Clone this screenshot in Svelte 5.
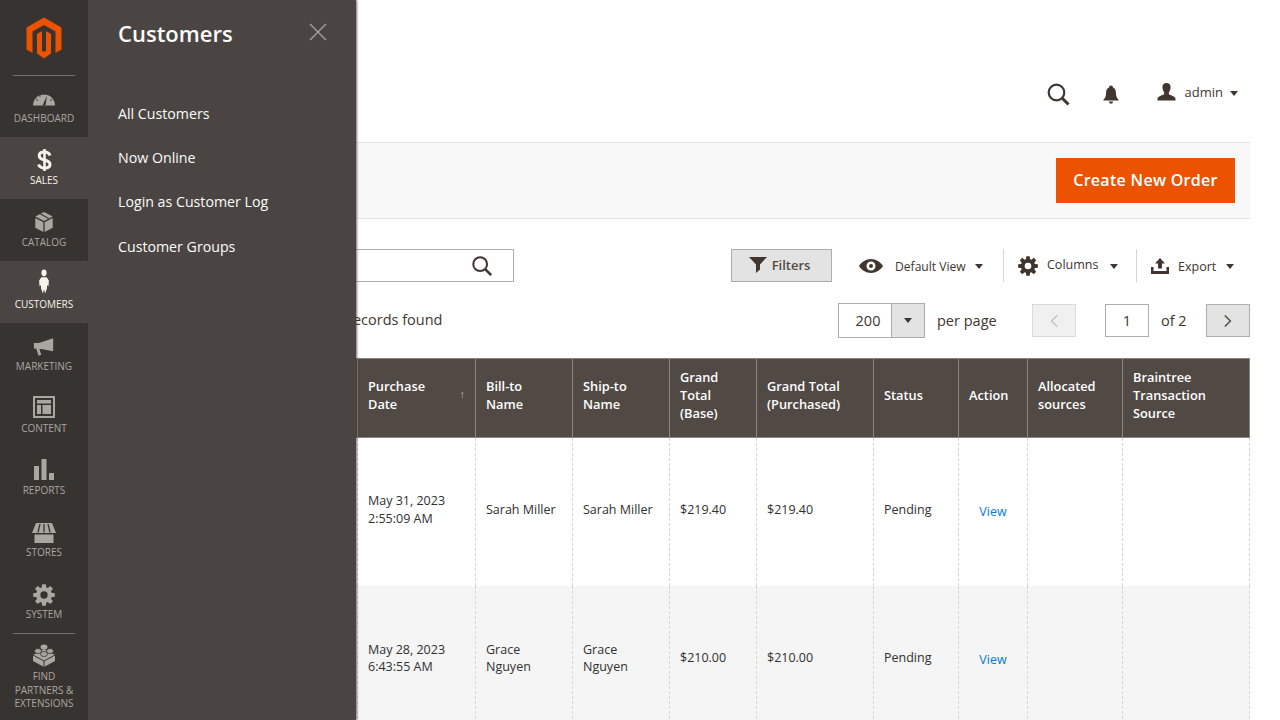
<script>
  const gear = (() => {
    // 8 tooth cog with a round hole, drawn in a 24x24 box
    let d = '';
    for (let i = 0; i < 8; i++) {
      const a = (i * Math.PI) / 4;
      const pts = [[-0.3, 8.6], [-0.17, 12], [0.17, 12], [0.3, 8.6]];
      for (const [o, r] of pts) {
        const x = 12 + r * Math.sin(a + o);
        const y = 12 - r * Math.cos(a + o);
        d += (d ? 'L' : 'M') + x.toFixed(2) + ' ' + y.toFixed(2);
      }
    }
    return d + 'Z M12 8a4 4 0 1 0 0 8a4 4 0 1 0 0-8Z';
  })();

  const navItems = [
    { id: 'dashboard', label: 'Dashboard' },
    { id: 'sales', label: 'Sales', active: true },
    { id: 'catalog', label: 'Catalog' },
    { id: 'customers', label: 'Customers', active: true },
    { id: 'marketing', label: 'Marketing' },
    { id: 'content', label: 'Content' },
    { id: 'reports', label: 'Reports' },
    { id: 'stores', label: 'Stores' },
    { id: 'system', label: 'System' }
  ];

  const links = ['All Customers', 'Now Online', 'Login as Customer Log', 'Customer Groups'];

  const columns = [
    { label: '', w: 239 },
    { label: 'Purchase Date', w: 118, sort: true },
    { label: 'Bill-to Name', w: 97 },
    { label: 'Ship-to Name', w: 97 },
    { label: 'Grand Total (Base)', w: 87 },
    { label: 'Grand Total (Purchased)', w: 117 },
    { label: 'Status', w: 85 },
    { label: 'Action', w: 69 },
    { label: 'Allocated sources', w: 95 },
    { label: 'Braintree Transaction Source', w: 127 }
  ];

  const rows = [
    { date: ['May 31, 2023', '2:55:09 AM'], bill: 'Sarah Miller', ship: 'Sarah Miller', base: '$219.40', paid: '$219.40', status: 'Pending' },
    { date: ['May 28, 2023', '6:43:55 AM'], bill: 'Grace Nguyen', ship: 'Grace Nguyen', base: '$210.00', paid: '$210.00', status: 'Pending' }
  ];
</script>

<div class="shell">
  <nav class="nav">
    <div class="logo">
      <svg width="36" height="42" viewBox="26.500 16.500 36 42">
        <path fill="#eb5202" d="M44.500 17L62 27V49L56 52.500V31L44.500 24.500L33 31V52.500L27 49V27Z" />
        <path fill="#eb5202" d="M37.500 33.500L42.500 30.500V50L44.500 51.500L46.500 50V30.500L51.500 33.500V53L44.500 58L37.500 53Z" />
      </svg>
    </div>
    <ul class="menu">
      {#each navItems as item}
        <li class="item" class:active={item.active}>
          <span class="ico {item.id}">
            {#if item.id === 'dashboard'}
              <svg width="24" height="18" viewBox="0 0 24 18"><path fill="currentColor" d="M1 16.500a11 11 0 1 1 22 0Z" /><path fill="#373330" d="M10.500 16.500L15 6.500L13.500 16.500Z" /><circle cx="5" cy="11" r=".8" fill="#373330" /><circle cx="8" cy="7" r=".8" fill="#373330" /><circle cx="12" cy="5" r=".8" fill="#373330" /><circle cx="19" cy="11" r=".8" fill="#373330" /></svg>
            {:else if item.id === 'sales'}
              <svg width="15" height="22" viewBox="0 0 15 22"><path fill="none" stroke="currentColor" stroke-width="3" d="M13 6.500C12 3.500 9.500 3 7.500 3C4 3 2.200 4.800 2.200 6.800C2.200 12.500 13 9.500 13 15.500C13 17.800 10.500 19 7.500 19C5 19 2.500 18 1.500 15.500" /><path fill="currentColor" d="M6.200 0H8.800V22H6.200Z" /></svg>
            {:else if item.id === 'catalog'}
              <svg width="22" height="22" viewBox="0 0 22 24"><path fill="currentColor" d="M11 1L20.500 6L11 11L1.500 6Z" /><path fill="#373330" d="M6 3.300L15.500 8.500L16.800 7.800L7.500 2.600Z" /><path fill="currentColor" d="M1.500 7.500L10.300 12.200V23L1.500 18.300ZM20.500 7.500V18.300L11.700 23V12.200Z" /></svg>
            {:else if item.id === 'customers'}
              <svg width="12" height="25" viewBox="0 0 16 26" preserveAspectRatio="none"><circle cx="8" cy="4" r="3.500" fill="currentColor" /><path fill="currentColor" d="M4.500 8.500H11.500L14.500 12L14 18L12 17V20L9.500 25.500L8 21L6.500 25.500L4 20V17L2 18L1.500 12Z" /></svg>
            {:else if item.id === 'marketing'}
              <svg width="22" height="19" viewBox="0 0 24 20"><path fill="currentColor" d="M22 0V14L9 11.500H7L9 18L6 19L3.500 11H1V5H6.500Z" /></svg>
            {:else if item.id === 'content'}
              <svg width="22" height="22" viewBox="0 0 22 22"><path fill="currentColor" fill-rule="evenodd" d="M0 0H22V22H0ZM2 2V20H20V2ZM4 4H18V7.500H4ZM4 9H8V18H4ZM9.500 9H18V18H9.500Z" /></svg>
            {:else if item.id === 'reports'}
              <svg width="20" height="21" viewBox="0 0 20 21"><path fill="currentColor" d="M0 7H5V21H0ZM7.500 0H12.500V21H7.500ZM15 14H20V21H15Z" /></svg>
            {:else if item.id === 'stores'}
              <svg width="24" height="20" viewBox="0 0 24 20"><path fill="currentColor" d="M4 0H20L24 10H0ZM2.500 11.500H21.500V20H2.500Z" /><path stroke="#373330" stroke-width="1.300" d="M8 1L6 9.500M12 1V9.500M16 1L18 9.500" /></svg>
            {:else if item.id === 'system'}
              <svg width="22" height="22" viewBox="0 0 24 24"><path fill="currentColor" fill-rule="evenodd" d={gear} /></svg>
            {/if}
          </span>
          <span class="label">{item.label}</span>
        </li>
      {/each}
    </ul>
    <div class="item partners">
      <span class="ico">
        <svg width="24" height="24" viewBox="0 0 24 24"><path fill="currentColor" d="M12 6L23 12V18L12 24L1 18V12Z" /><ellipse cx="12" cy="4" rx="3.500" ry="2.500" fill="currentColor" /><ellipse cx="6" cy="8" rx="3.500" ry="2.500" fill="currentColor" stroke="#373330" stroke-width=".8" /><ellipse cx="18" cy="8" rx="3.500" ry="2.500" fill="currentColor" stroke="#373330" stroke-width=".8" /><ellipse cx="12" cy="11" rx="3.500" ry="2.500" fill="currentColor" stroke="#373330" stroke-width=".8" /><path stroke="#373330" fill="none" d="M1 12L12 18L23 12M12 18V24" /></svg>
      </span>
      <span class="label">Find<br />Partners &amp;<br />Extensions</span>
    </div>
  </nav>

  <aside class="panel">
    <div class="panel-head">
      <h2>Customers</h2>
      <svg class="close" width="18" height="18" viewBox="0 0 18 18"><path stroke="#a8a5a1" stroke-width="1.300" fill="none" d="M1 1L17 17M17 1L1 17" /></svg>
    </div>
    <ul class="links">
      {#each links as link}
        <li>{link}</li>
      {/each}
    </ul>
  </aside>

  <main class="main">
    <header class="top">
      <svg width="24" height="24" viewBox="0 0 24 24" class="top-search"><circle cx="10.500" cy="10.500" r="7.800" fill="none" stroke="#41362f" stroke-width="2.200" /><path stroke="#41362f" stroke-width="3" d="M16 16L22.500 22.500" /></svg>
      <svg width="16" height="19" viewBox="0 0 16 19" class="top-bell"><path fill="#41362f" d="M8 0.500C9.500 0.500 10 1.500 10 2.500C12.500 3.500 13 6 13 9C13 12 14.500 13.500 15.500 14.500V15.500H.5V14.500C1.500 13.500 3 12 3 9C3 6 3.500 3.500 6 2.500C6 1.500 6.500 .5 8 .5ZM6 16.500H10C10 18 9 18.700 8 18.700C7 18.700 6 18 6 16.500Z" /></svg>
      <svg width="19" height="18" viewBox="0 0 20 20" class="top-user" preserveAspectRatio="none"><path fill="#41362f" d="M10 0C13 0 14.300 2 14.300 4.500C14.300 7 13.500 9 12.500 10.500V12.500C14.500 13.800 19 14.500 19.500 17.500V19.500H.5V17.500C1 14.500 5.500 13.800 7.500 12.500V10.500C6.500 9 5.700 7 5.700 4.500C5.700 2 7 0 10 0Z" /></svg>
      <span class="admin">admin</span>
      <i class="caret admin-caret"></i>
    </header>

    <section class="actions">
      <button class="primary">Create New Order</button>
    </section>

    <div class="toolbar">
      <div class="search">
        <svg width="22" height="22" viewBox="0 0 24 24"><circle cx="10" cy="10" r="7.500" fill="none" stroke="#41362f" stroke-width="2.200" /><path stroke="#41362f" stroke-width="2.800" d="M15.500 15.500L22 22" /></svg>
      </div>
      <button class="filters">
        <svg width="18" height="16" viewBox="0 0 18 16"><path fill="#41362f" d="M0 0H18L11 7.500V12.500L7 16V7.500Z" /></svg>
        Filters
      </button>
      <div class="tool view">
        <svg width="24" height="14" viewBox="0 0 24 14"><path fill="#41362f" fill-rule="evenodd" d="M12 0C17 0 21.500 3 24 7C21.500 11 17 14 12 14C7 14 2.500 11 0 7C2.500 3 7 0 12 0ZM12 2.500A4.500 4.500 0 1 0 12 11.500A4.500 4.500 0 1 0 12 2.500ZM12 5A2 2 0 1 1 12 9A2 2 0 1 1 12 5Z" /></svg>
        <span>Default View</span>
        <i class="caret"></i>
      </div>
      <div class="tool cols">
        <svg width="20" height="20" viewBox="0 0 24 24"><path fill="#41362f" fill-rule="evenodd" d={gear} /></svg>
        <span class="raise">Columns</span>
        <i class="caret"></i>
      </div>
      <div class="tool export">
        <svg width="18" height="16" viewBox="0 0 18 16"><path fill="#41362f" d="M9 0L14 5.500H11V10.500H7V5.500H4ZM0 9H2.500V13H15.500V9H18V16H0Z" /></svg>
        <span>Export</span>
        <i class="caret"></i>
      </div>
    </div>

    <div class="pager">
      <span class="found">records found</span>
      <div class="per">
        <span class="per-val">200</span>
        <span class="per-btn"><i class="caret"></i></span>
      </div>
      <span class="per-text">per page</span>
      <span class="page-btn prev">
        <svg width="8" height="14" viewBox="0 0 10 16"><path fill="none" stroke="#c2c2c2" stroke-width="1.800" d="M9 1L2 8L9 15" /></svg>
      </span>
      <span class="page-input">1</span>
      <span class="of">of 2</span>
      <span class="page-btn next">
        <svg width="8" height="14" viewBox="0 0 10 16"><path fill="none" stroke="#514943" stroke-width="1.800" d="M1 1L8 8L1 15" /></svg>
      </span>
    </div>

    <table>
      <colgroup>
        {#each columns as c}
          <col style="width: {c.w}px" />
        {/each}
      </colgroup>
      <thead>
        <tr>
          {#each columns as c}
            <th class:sorted={c.sort}>
              {c.label}
              {#if c.sort}<span class="arrow">↑</span>{/if}
            </th>
          {/each}
        </tr>
      </thead>
      <tbody>
        {#each rows as r}
          <tr>
            <td></td>
            <td>{r.date[0]}<br />{r.date[1]}</td>
            <td>{r.bill}</td>
            <td>{r.ship}</td>
            <td>{r.base}</td>
            <td>{r.paid}</td>
            <td>{r.status}</td>
            <td class="act"><span class="view-link">View</span></td>
            <td></td>
            <td></td>
          </tr>
        {/each}
      </tbody>
    </table>
  </main>
</div>

<style>
  :global(body) {
    margin: 0;
    overflow: hidden;
    background: #fff;
  }
  .shell {
    position: relative;
    display: flex;
    height: 720px;
    overflow: hidden;
    font-family: "Open Sans", sans-serif;
    color: #41362f;
  }

  .nav {
    flex: 0 0 88px;
    display: flex;
    flex-direction: column;
    background: #373330;
  }
  .logo {
    height: 76px;
    margin: 0 13px -1px;
    box-sizing: border-box;
    padding-top: 17px;
    display: flex;
    justify-content: center;
    border-bottom: 1px solid #736e69;
  }
  .menu {
    list-style: none;
    margin: 0;
    padding: 0;
  }
  .item {
    height: 62px;
    box-sizing: border-box;
    display: flex;
    flex-direction: column;
    align-items: center;
    justify-content: flex-end;
    padding-bottom: 12px;
    color: #aaa6a0;
  }
  .item.active {
    background: #4a4542;
    color: #f7f3eb;
  }
  .ico {
    height: 26px;
    display: flex;
    align-items: center;
    justify-content: center;
  }
  .dashboard svg,
  .sales svg,
  .catalog svg {
    margin-top: 2px;
  }
  .marketing svg,
  .stores svg,
  .system svg {
    margin-top: 4px;
  }
  .customers svg {
    margin-top: -3px;
  }
  .label {
    font-size: 10px;
    line-height: 13px;
    margin-top: 2px;
    text-transform: uppercase;
    text-align: center;
  }
  .partners {
    height: auto;
    margin: 0 13px;
    padding: 8px 0 0;
    border-top: 1px solid #736e69;
    justify-content: flex-start;
  }
  .partners .label {
    margin: 2px -8px 0;
    line-height: 13.500px;
  }

  .panel {
    position: absolute;
    left: 88px;
    top: 0;
    width: 268px;
    height: 100%;
    background: #4a4542;
    box-shadow: 1px 0 2px rgba(60, 55, 50, .7);
    z-index: 2;
    color: #fcfcfc;
  }
  .panel-head {
    display: flex;
    justify-content: space-between;
    align-items: flex-start;
    padding: 17px 29px 0 30px;
  }
  h2 {
    margin: 0;
    font-size: 22px;
    font-weight: 600;
    line-height: 32px;
  }
  .close {
    margin-top: 6px;
  }
  .links {
    list-style: none;
    margin: 55px 0 0;
    padding: 0 30px;
    font-size: 14.200px;
    line-height: 20px;
  }
  .links li {
    margin-bottom: 24.200px;
  }

  .main {
    flex: 1;
    min-width: 0;
    padding: 0 30px;
  }
  .top {
    height: 142px;
    display: flex;
    align-items: center;
    justify-content: flex-end;
    margin-right: -30px;
    padding-right: 42px;
    box-sizing: border-box;
  }
  .top-search {
    margin-top: 46px;
  }
  .top-bell {
    margin: 46px 0 0 33px;
  }
  .top-user {
    margin: 42px 0 0 38px;
  }
  .admin {
    font-size: 13px;
    margin: 42px 0 0 9px;
  }
  .admin-caret {
    margin: 44px 0 0 7px;
  }
  .caret {
    display: inline-block;
    width: 0;
    height: 0;
    border: 4.500px solid transparent;
    border-top: 5px solid #41362f;
    border-bottom: 0;
  }

  .actions {
    margin-left: -30px;
    height: 77px;
    box-sizing: border-box;
    border-top: 1px solid #e3e3e3;
    border-bottom: 1px solid #e3e3e3;
    background: #f8f8f8;
    display: flex;
    justify-content: flex-end;
    align-items: center;
    padding-right: 15px;
  }
  .primary {
    width: 179px;
    height: 45px;
    border: 0;
    background: #eb5202;
    color: #fff;
    font-family: inherit;
    font-size: 16px;
    font-weight: 600;
    letter-spacing: .3px;
    padding: 0;
    margin-top: -1px;
  }

  .toolbar {
    margin-top: 30px;
    height: 33px;
    display: flex;
    align-items: stretch;
  }
  .search {
    width: 396px;
    box-sizing: border-box;
    border: 1px solid #adadad;
    display: flex;
    align-items: center;
    justify-content: flex-end;
    padding-right: 20px;
  }
  .filters {
    margin-left: 217px;
    width: 101px;
    border: 1px solid #adadad;
    background: #e3e3e3;
    color: #514943;
    font-family: inherit;
    font-size: 13px;
    font-weight: 600;
    display: flex;
    align-items: center;
    justify-content: center;
    gap: 5px;
    padding: 0 4px 2px 0;
  }
  .tool {
    display: flex;
    align-items: center;
    font-size: 12.500px;
  }
  .view {
    margin-left: 27px;
    width: 145px;
    box-sizing: border-box;
    border-right: 1px solid #d6d6d6;
  }
  .view span {
    margin: 1px 0 0 12px;
    font-size: 12.100px;
  }
  .view .caret {
    margin: 2px 0 0 9px;
  }
  .cols {
    width: 133px;
    box-sizing: border-box;
    padding-left: 14px;
    border-right: 1px solid #d6d6d6;
  }
  .cols span {
    margin-left: 9px;
  }
  .cols .caret {
    margin: 2px 0 0 12px;
  }
  .raise {
    margin-bottom: 2px;
  }
  .export {
    padding-left: 14px;
  }
  .export span {
    margin: 1px 0 0 9px;
  }
  .export .caret {
    margin: 2px 0 0 10px;
  }

  .pager {
    margin-top: 21px;
    height: 35px;
    display: flex;
    align-items: center;
    font-size: 14.500px;
  }
  .found {
    margin-left: 229px;
    margin-right: auto;
    margin-top: -2px;
  }
  .per {
    width: 87px;
    height: 35px;
    box-sizing: border-box;
    border: 1px solid #adadad;
    display: flex;
  }
  .per-val {
    flex: 1;
    text-align: center;
    line-height: 33px;
    margin-left: 6px;
  }
  .per-btn {
    width: 32px;
    background: #e3e3e3;
    border-left: 1px solid #adadad;
    display: flex;
    align-items: center;
    justify-content: center;
  }
  .per-text {
    margin-left: 12px;
    width: 95px;
  }
  .page-btn {
    width: 44px;
    height: 33px;
    box-sizing: border-box;
    display: flex;
    align-items: center;
    justify-content: center;
    border: 1px solid #adadad;
    background: #e3e3e3;
  }
  .prev {
    background: #f0f0f0;
    border-color: #d9d9d9;
  }
  .page-input {
    margin-left: 29px;
    width: 44px;
    height: 33px;
    box-sizing: border-box;
    border: 1px solid #adadad;
    text-align: center;
    line-height: 31px;
  }
  .of {
    margin-left: 12px;
    width: 45px;
  }

  table {
    margin-top: 20px;
    width: 1132px;
    table-layout: fixed;
    border-collapse: collapse;
  }
  th {
    position: relative;
    height: 79px;
    box-sizing: border-box;
    padding: 0 10px 6px;
    background: #514943;
    border: 1px solid #8a837f;
    color: #fff;
    font-size: 12.800px;
    font-weight: 600;
    text-align: left;
    line-height: 18px;
  }
  th.sorted {
    padding-right: 40px;
  }
  .arrow {
    position: absolute;
    right: 10px;
    top: 26px;
    font-size: 11px;
    color: #b5afa9;
  }
  td {
    height: 148px;
    box-sizing: border-box;
    padding: 0 10px 4px;
    border-left: 1px dashed #d6d6d6;
    border-right: 1px dashed #d6d6d6;
    line-height: 18px;
    font-size: 12.500px;
    color: #303030;
  }
  tbody tr:nth-child(2) {
    background: #f5f5f5;
  }
  tbody tr:nth-child(2) td {
    padding-bottom: 3px;
    line-height: 17.500px;
  }
  .act {
    text-align: center;
  }
  .view-link {
    color: #007bdb;
    position: relative;
    top: 2px;
  }
</style>
